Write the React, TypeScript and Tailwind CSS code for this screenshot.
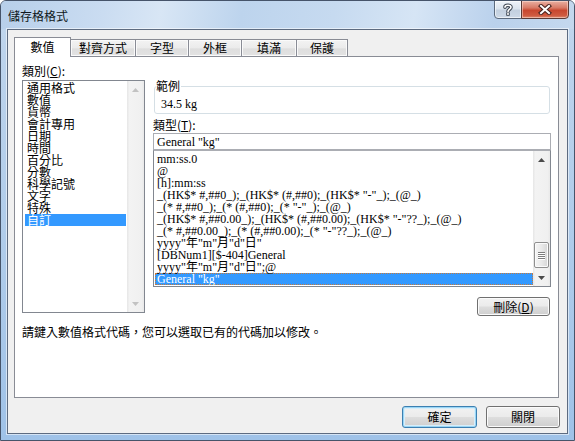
import React from "react";

const categories = [
  "通用格式",
  "數值",
  "貨幣",
  "會計專用",
  "日期",
  "時間",
  "百分比",
  "分數",
  "科學記號",
  "文字",
  "特殊",
  "自訂",
];

const formatCodes = [
  "mm:ss.0",
  "@",
  "[h]:mm:ss",
  '_(HK$* #,##0_);_(HK$* (#,##0);_(HK$* "-"_);_(@_)',
  '_(* #,##0_);_(* (#,##0);_(* "-"_);_(@_)',
  '_(HK$* #,##0.00_);_(HK$* (#,##0.00);_(HK$* "-"??_);_(@_)',
  '_(* #,##0.00_);_(* (#,##0.00);_(* "-"??_);_(@_)',
  'yyyy"年"m"月"d"日"',
  "[DBNum1][$-404]General",
  'yyyy"年"m"月"d"日";@',
  'General "kg"',
];

const tabs = [
  { label: "數值", w: "w-[57px]" },
  { label: "對齊方式", w: "w-[66px]" },
  { label: "字型", w: "w-[54px]" },
  { label: "外框", w: "w-[54px]" },
  { label: "填滿", w: "w-[56px]" },
  { label: "保護", w: "w-[52px]" },
];

function Arrow({ up, color }: { up?: boolean; color: string }) {
  return (
    <svg width="7" height="4" viewBox="0 0 7 4">
      <polygon points={up ? "0,4 7,4 3.5,0" : "0,0 7,0 3.5,4"} fill={color} />
    </svg>
  );
}

function Button({ children, primary }: { children: React.ReactNode; primary?: boolean }) {
  return (
    <div
      className={`flex items-center justify-center rounded-[3px] border bg-[linear-gradient(to_bottom,#f2f2f2_0%,#ebebeb_48%,#dddddd_52%,#cfcfcf_100%)] ${
        primary
          ? "border-[#3c7fb1] shadow-[inset_0_0_0_1px_#9ad6f5,inset_0_0_0_2px_#d8eefa]"
          : "border-[#707070] shadow-[inset_0_0_0_1px_#fbfbfb]"
      }`}
    >
      {children}
    </div>
  );
}

export default function App() {
  return (
    <div className="w-[575px] h-[441px] overflow-hidden rounded-t-[6px] border border-[#46546a] bg-[linear-gradient(to_bottom,#c3d8ee_0%,#bcd3ec_12%,#aecbea_60%,#9fc2e8_100%)] font-['Noto_Sans_CJK_TC',sans-serif] text-[12px] leading-[12px] text-black">
      {/* title bar */}
      <div className="h-[28px] flex items-start justify-between bg-[linear-gradient(100deg,#b7cfea_0%,#cadcf1_18%,#d8e6f5_28%,#bdd4ed_42%,#c6daf0_58%,#d6e5f5_72%,#bad1ec_86%,#c4d8ee_100%)]">
        <div className="pl-[7px] pt-[9px] text-[#101820]">儲存格格式</div>
        <div className="flex -mt-px mr-[5px]">
          <div className="w-[28px] h-[19px] flex items-center justify-center border border-[#5b6a7d] rounded-bl-[4px] bg-[linear-gradient(to_bottom,#eef3f9_0%,#dbe4ee_45%,#c3d0df_55%,#cdd9e7_100%)] shadow-[inset_0_0_0_1px_rgba(255,255,255,0.6)]">
            <svg width="10" height="13" viewBox="0 0 10 13">
              <path d="M2 4.2C2 1.6 8 1.6 8 4.2C8 6.2 5 6.3 5 8.6M5 10.2V11.6" fill="none" stroke="#3d4652" strokeWidth="3.6" strokeLinecap="round" />
              <path d="M2 4.2C2 1.6 8 1.6 8 4.2C8 6.2 5 6.3 5 8.6M5 10.2V11.6" fill="none" stroke="#ffffff" strokeWidth="1.6" strokeLinecap="round" />
            </svg>
          </div>
          <div className="w-[48px] h-[19px] -ml-px flex items-center justify-center border border-[#5a3a36] rounded-br-[4px] bg-[linear-gradient(to_bottom,#eab0a2_0%,#d87a66_40%,#c8472f_55%,#cf5a40_85%,#dc8a70_100%)] shadow-[inset_0_0_0_1px_rgba(255,230,220,0.5)]">
            <svg width="14" height="11" viewBox="0 0 14 11">
              <path d="M3 2L11 9M11 2L3 9" stroke="#4a2420" strokeWidth="4.2" strokeLinecap="square" />
              <path d="M3 2L11 9M11 2L3 9" stroke="#ffffff" strokeWidth="2" strokeLinecap="square" />
            </svg>
          </div>
        </div>
      </div>

      {/* client area */}
      <div className="mx-[6px] h-[405px] border border-[#5d6b80] bg-[#f0f0f0] shadow-[0_0_0_1px_rgba(255,255,255,0.55)] pt-[7px] pl-[6px] flex flex-col">
        {/* tab strip */}
        <div className="h-[20px] -mb-px relative z-10 flex items-end">
          {tabs.map((t, i) =>
            i === 0 ? (
              <div
                key={t.label}
                className={`${t.w} h-[20px] border border-b-0 border-[#898c95] bg-white flex items-center justify-center pb-[1px]`}
              >
                {t.label}
              </div>
            ) : (
              <div
                key={t.label}
                className={`${t.w} h-[18px] -ml-px border border-[#898c95] bg-[linear-gradient(to_bottom,#f3f3f3_0%,#ebebeb_50%,#dedede_55%,#e3e3e3_100%)] shadow-[inset_0_0_0_1px_#fafafa] flex items-center justify-center`}
              >
                {t.label}
              </div>
            )
          )}
        </div>

        {/* tab page */}
        <div className="w-[545px] h-[342px] border border-[#898c95] bg-white pt-[8px] pl-[7px] flex flex-col">
          <div className="flex">
            {/* category list */}
            <div className="w-[123px] flex flex-col">
              <div>
                類別(<span className="underline">C</span>):
              </div>
              <div className="mt-[3px] h-[233px] border border-[#828790] flex">
                <div className="flex-1 pl-[2px] pr-[1px] pt-[1px]">
                  {categories.map((c) => (
                    <div
                      key={c}
                      className={`h-[12px] pl-[2px] ${c === "自訂" ? "bg-[#3399ff] text-white" : ""}`}
                    >
                      {c}
                    </div>
                  ))}
                </div>
                <div className="w-[17px] flex flex-col justify-between bg-[linear-gradient(to_right,#e6e6e6,#f3f3f3_15%,#f0f0f0_85%,#e9e9e9)]">
                  <div className="h-[17px] flex items-center justify-center">
                    <Arrow up color="#c2c2c2" />
                  </div>
                  <div className="h-[17px] flex items-center justify-center">
                    <Arrow color="#c2c2c2" />
                  </div>
                </div>
              </div>
            </div>

            {/* sample, type box and code list */}
            <div className="ml-[8px] w-[398px] flex flex-col">
              <fieldset className="mt-[15px] mx-[1px] h-[34px] border border-[#d5dfe5] rounded-[3px] pl-[6px]">
                <legend className="ml-[-5px] pr-[1px] leading-[12px]">範例</legend>
                <div className="pt-[6px] font-['Liberation_Serif','Noto_Sans_CJK_TC',serif]">34.5 kg</div>
              </fieldset>

              <div className="mt-[5px]">
                類型(<span className="underline">T</span>):
              </div>
              <div className="mt-[2px] h-[17px] border border-[#abadb3] pl-[3px] flex items-center font-['Liberation_Serif','Noto_Sans_CJK_TC',serif]">
                General "kg"
              </div>
              <div className="h-[137px] border border-[#828790] border-t-[#abadb3] flex">
                <div className="flex-1 pl-[1px] pt-[2px] overflow-hidden font-['Liberation_Serif','Noto_Sans_CJK_TC',serif]">
                  {formatCodes.map((f, i) =>
                    i === formatCodes.length - 1 ? (
                      <div
                        key={f}
                        className="h-[12px] pl-[1px] bg-[#3399ff] text-white border border-dotted border-[#c87a3a] leading-[10px] whitespace-pre"
                      >
                        {f}
                      </div>
                    ) : (
                      <div key={f} className="h-[12px] pl-[2px] whitespace-pre">
                        {f}
                      </div>
                    )
                  )}
                </div>
                <div className="w-[17px] flex flex-col bg-[linear-gradient(to_right,#e6e6e6,#f3f3f3_15%,#f0f0f0_85%,#e9e9e9)]">
                  <div className="h-[17px] flex items-center justify-center">
                    <Arrow up color="#4a4a4a" />
                  </div>
                  <div className="flex-1 flex flex-col justify-end items-center pb-[1px]">
                    <div className="w-[15px] h-[26px] rounded-[2px] border border-[#8f8f8f] bg-[linear-gradient(to_right,#f5f5f5,#e9e9e9_50%,#d6d6d6)] shadow-[inset_0_0_0_1px_#fbfbfb] flex flex-col items-center justify-center gap-[1px]">
                      {[0, 1, 2, 3].map((k) => (
                        <div key={k} className="w-[7px] h-[1px] bg-[#7d7d7d] shadow-[0_1px_0_#ffffff]" />
                      ))}
                    </div>
                  </div>
                  <div className="h-[17px] flex items-center justify-center">
                    <Arrow color="#4a4a4a" />
                  </div>
                </div>
              </div>

              <div className="mt-[10px] self-end mr-[1px] w-[73px] h-[19px]">
                <Button>
                  <span className="h-[17px] flex items-center">
                    刪除(<span className="underline">D</span>)
                  </span>
                </Button>
              </div>
            </div>
          </div>

          <div className="mt-[10px]">請鍵入數值格式代碼，您可以選取已有的代碼加以修改。</div>
        </div>

        {/* dialog buttons */}
        <div className="mt-[8px] flex justify-end gap-[9px] pr-[7px]">
          <div className="w-[75px] h-[22px]">
            <Button primary>
              <span className="h-[20px] flex items-center">確定</span>
            </Button>
          </div>
          <div className="w-[74px] h-[22px]">
            <Button>
              <span className="h-[20px] flex items-center">關閉</span>
            </Button>
          </div>
        </div>
      </div>
    </div>
  );
}
